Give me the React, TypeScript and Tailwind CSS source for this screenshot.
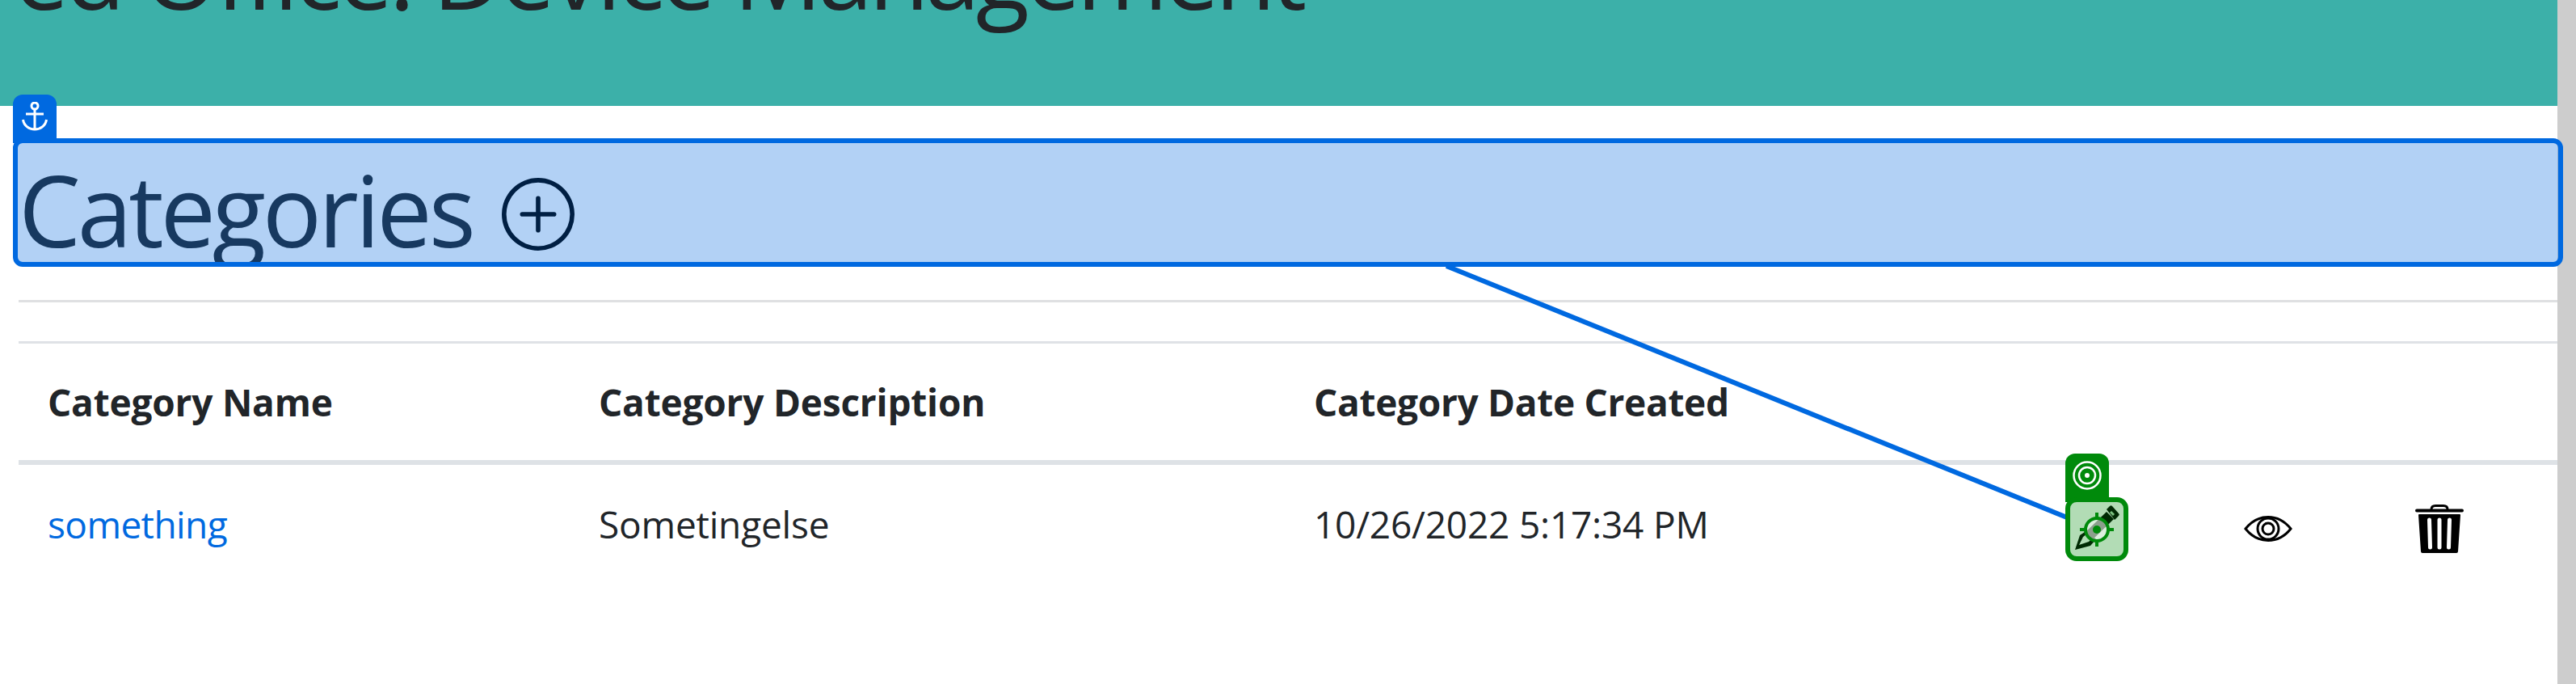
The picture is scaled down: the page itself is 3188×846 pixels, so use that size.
import { BsPlusCircle } from "react-icons/bs";

const font = { fontFamily: '"Open Sans", "Noto Sans", sans-serif' };

function AnchorIcon() {
  return (
    <svg viewBox="0 0 32 36" className="h-[36px] w-[32px]" fill="none" stroke="white" strokeWidth="3">
      <circle cx="16" cy="5" r="4" />
      <path d="M16 9v25M5 15h22M1.500 22c1 7 7 12 14.500 12s13.500-5 14.500-12" />
    </svg>
  );
}

function TargetIcon() {
  return (
    <svg viewBox="0 0 36 36" className="h-[36px] w-[36px]" fill="none" stroke="white" strokeWidth="2.500">
      <circle cx="18" cy="18" r="16.500" />
      <circle cx="18" cy="18" r="10" />
      <circle cx="18" cy="18" r="3" fill="white" stroke="none" />
    </svg>
  );
}

function PenIcon() {
  return (
    <svg viewBox="0 0 70 60" className="h-[60px] w-[70px]">
      {/* nib, hollow in the middle */}
      <path
        fillRule="evenodd"
        d="M8 56l6-18 9-6 11 11-7 8zM13 50l12-4 3-3-6-6-4 3z"
        fill="black"
      />
      {/* barrel */}
      <path d="M19 36l28-27 9 9-28 27z" fill="black" />
      {/* cap end */}
      <path d="M47 6l4-4a2 2 0 0 1 3 0l8 9a2 2 0 0 1 0 3l-5 5z" fill="black" />
      <path d="M52 9l4 4" stroke="#b3dbb5" strokeWidth="3" />
    </svg>
  );
}

function CrosshairIcon() {
  return (
    <svg viewBox="0 0 42 42" className="h-[42px] w-[42px]" fill="none" stroke="#008a0b" strokeWidth="4">
      <circle cx="21" cy="21" r="14" fill="#ffffff" fillOpacity="0.55" />
      <path d="M21 0v7M21 35v7M0 21h7M35 21h7" />
      <circle cx="21" cy="21" r="5" fill="#008a0b" stroke="none" />
    </svg>
  );
}

function EyeIcon() {
  return (
    <svg viewBox="0 0 60 32" className="h-[32px] w-[60px]" fill="none" stroke="black" strokeWidth="3">
      <path d="M2 16C10 6 20 1.500 30 1.500S50 6 58 16c-8 10-18 14.500-28 14.500S10 26 2 16z" />
      <circle cx="30" cy="16" r="13" />
      <circle cx="30" cy="16" r="7" />
    </svg>
  );
}

function TrashIcon() {
  return (
    <svg viewBox="0 0 60 60" className="h-[60px] w-[60px]">
      <path d="M2 7.500h56" stroke="black" strokeWidth="4" strokeLinecap="round" />
      <path d="M20 6c0-3 2-4.500 5-4.500h10c3 0 5 1.500 5 4.500" fill="none" stroke="black" strokeWidth="3" />
      <path
        fillRule="evenodd"
        d="M5 12h50a1 1 0 0 1 1 1l-3 45a2 2 0 0 1-2 2H9a2 2 0 0 1-2-2L4 13a1 1 0 0 1 1-1zM15 19l1 34a2 2 0 0 0 5 0l-1-34a2.500 2.500 0 0 0-5 0zM27.500 19v34a2.500 2.500 0 0 0 5 0V19a2.500 2.500 0 0 0-5 0zM40 19l-1 34a2 2 0 0 0 5 0l1-34a2.500 2.500 0 0 0-5 0z"
      />
    </svg>
  );
}

export default function App() {
  return (
    <div className="relative flex h-[846px] overflow-hidden bg-white text-[#212529]" style={font}>
      <main className="min-w-0 flex-1">
        <header className="h-[131px] overflow-hidden bg-[#3cb0a9]">
          <p className="ml-[17px] mt-[-118px] whitespace-nowrap text-[122px] leading-[166px] tracking-[-5px]">
            ed Office: Device Management
          </p>
        </header>

        <div className="pl-[23px]">
          <h1 className="mt-[40px] flex h-[159px] items-center overflow-hidden whitespace-nowrap pt-[16px] text-[122px] leading-none tracking-[-4.200px]">
            Categories
            <BsPlusCircle className="ml-[36px] mt-[13px] h-[90px] w-[90px] text-black" />
          </h1>

          <hr className="mt-[41px] h-[3px] border-0 bg-[#dfe0e2]" />
          <hr className="mt-[48px] h-[3px] border-0 bg-[#dfe2e6]" />

          <table className="w-full table-fixed text-[46px] tracking-[-0.200px]">
            <colgroup>
              <col className="w-[681px]" />
              <col className="w-[885px]" />
              <col className="w-[900px]" />
              <col className="w-[212px]" />
              <col className="w-[212px]" />
              <col className="w-[252px]" />
            </colgroup>
            <thead>
              <tr className="h-[147px] border-b-[6px] border-[#dee2e6] text-left">
                <th className="pl-[36px] pt-[1px] font-bold">Category Name</th>
                <th className="pl-[37px] pt-[1px] font-bold">Category Description</th>
                <th className="pl-[37px] pt-[1px] font-bold tracking-[-0.300px]">Category Date Created</th>
                <th />
                <th />
                <th />
              </tr>
            </thead>
            <tbody>
              <tr className="h-[150px]">
                <td className="pl-[36px] tracking-[-0.600px] text-[#0069e0]">something</td>
                <td className="pl-[37px]">Sometingelse</td>
                <td className="pl-[37px]">10/26/2022 5:17:34 PM</td>
                <td>
                  <div className="flex justify-start pl-[71px] pt-[10px]">
                    <PenIcon />
                  </div>
                </td>
                <td>
                  <div className="flex justify-center pt-[10px]">
                    <EyeIcon />
                  </div>
                </td>
                <td>
                  <div className="flex justify-start pl-[76px] pt-[10px]">
                    <TrashIcon />
                  </div>
                </td>
              </tr>
            </tbody>
          </table>
        </div>
      </main>

      <div className="w-[23px] shrink-0 bg-[#cdcdcd]" />

      {/* blue anchor selection over the heading */}
      <div className="absolute left-[16px] top-[117px] flex h-[60px] w-[54px] justify-center rounded-t-[12px] bg-[#0069e0] pt-[9px]">
        <AnchorIcon />
      </div>
      <div className="absolute left-[16px] top-[171px] h-[159px] w-[3156px] rounded-[12px] border-[6px] border-[#0069e0] bg-[#0069e0]/30" />

      {/* connector from heading to edit target */}
      <svg className="absolute inset-0 h-[846px] w-[3188px]" fill="none">
        <line x1="1790" y1="329" x2="2558" y2="640" stroke="#0069e0" strokeWidth="6" />
      </svg>

      {/* green target over the edit icon */}
      <div className="absolute left-[2556px] top-[561px] flex h-[60px] w-[54px] justify-center rounded-t-[12px] bg-[#008a0b] pt-[9px]">
        <TargetIcon />
      </div>
      <div className="absolute left-[2556px] top-[615px] flex h-[79px] w-[78px] items-center justify-center rounded-[14px] border-[6px] border-[#008a0b] bg-[#008a0b]/30">
        <CrosshairIcon />
      </div>
    </div>
  );
}
